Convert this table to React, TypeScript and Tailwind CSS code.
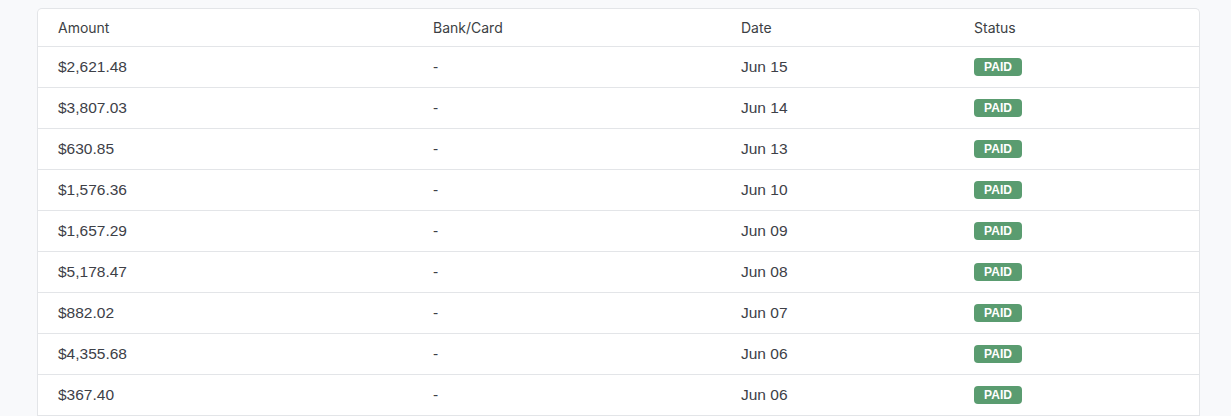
const ROWS = [
  { amount: "$2,621.48", date: "Jun 15" },
  { amount: "$3,807.03", date: "Jun 14" },
  { amount: "$630.85", date: "Jun 13" },
  { amount: "$1,576.36", date: "Jun 10" },
  { amount: "$1,657.29", date: "Jun 09" },
  { amount: "$5,178.47", date: "Jun 08" },
  { amount: "$882.02", date: "Jun 07" },
  { amount: "$4,355.68", date: "Jun 06" },
  { amount: "$367.40", date: "Jun 06" },
];

const COLS = "grid grid-cols-[375px_308px_233px_1fr]";

export default function App() {
  return (
    <div className="min-h-[416px] bg-[#f8f9fb] pt-2">
      <div className="ml-[37px] w-[1163px] bg-white border border-[#e3e5e8] border-b-0 rounded-t-[5px] overflow-hidden">
        {/* Header */}
        <div
          className={`${COLS} h-[38px] items-center border-b border-[#e3e5e8] text-[14px] text-[#3c3f44] font-['Inter']`}
        >
          <div className="px-5">Amount</div>
          <div className="px-5">Bank/Card</div>
          <div className="px-5">Date</div>
          <div className="px-5">Status</div>
        </div>

        {ROWS.map((row, i) => (
          <div
            key={i}
            className={`${COLS} h-[41px] items-center border-b border-[#e3e5e8] text-[15.5px] text-[#3d4047] font-['Liberation_Sans']`}
          >
            <div className="px-5">{row.amount}</div>
            <div className="px-5">-</div>
            <div className="px-5">{row.date}</div>
            <div className="px-5 flex">
              <span className="inline-flex items-center justify-center w-[48px] h-[18px] rounded-[4px] bg-[#5a9c70] text-white text-[12px] font-bold font-['Liberation_Sans']">
                PAID
              </span>
            </div>
          </div>
        ))}
      </div>
    </div>
  );
}
